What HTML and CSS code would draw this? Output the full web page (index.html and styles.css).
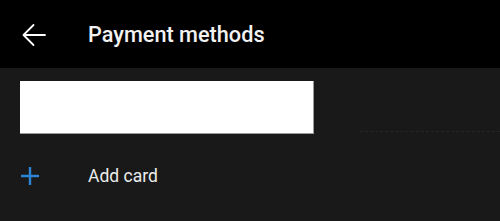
FILE: index.html
```html
<!DOCTYPE html>
<html lang="en">
<head>
    <meta charset="UTF-8">
    <title>Payment methods</title>
    <link rel="stylesheet" href="styles.css">
</head>
<body>
    <div class="top-bar">
        <svg class="back-icon" width="26" height="24" viewBox="0 0 26 24">
            <path d="M24 12H2.5M12.5 2L2.5 12l10 10" fill="none" stroke="#fff" stroke-width="1.8" stroke-linecap="round" stroke-linejoin="round"/>
        </svg>
        <h1 class="page-title">Payment methods</h1>
    </div>

    <div class="content">
        <div class="card-row">
            <div class="card"></div>
            <div class="card-fill"></div>
        </div>
        <div class="add-row">
            <svg class="plus-icon" width="20" height="20" viewBox="0 0 20 20">
                <path d="M10 1v18M1 10h18" stroke="#2b84d4" stroke-width="2.4"/>
            </svg>
            <span class="add-label">Add card</span>
        </div>
    </div>
</body>
</html>
```

FILE: styles.css
```css
body {
    margin: 0;
    height: 221px;
    overflow: hidden;
    background: #191919;
    font-family: Roboto, 'Noto Sans', sans-serif;
}

.top-bar {
    height: 68px;
    background: #000;
    display: flex;
    align-items: center;
    padding-left: 21px;
}

.back-icon {
    display: block;
    margin-top: 1px;
}

.page-title {
    margin: 1px 0 0 41px;
    font-size: 21.7px;
    font-weight: 500;
    color: #f2f2f2;
}

.content {
    padding: 13px 0 0 20px;
}

.card-row {
    display: flex;
}

.card {
    width: 293px;
    height: 52px;
    background: #fff;
    border-right: 1px solid #9a9a9a;
    border-bottom: 1px solid #9a9a9a;
}

.card-fill {
    flex: 1;
    align-self: flex-end;
    margin: 0 0 2px 46px;
    border-bottom: 1px dashed #262626;
}

.add-row {
    display: flex;
    align-items: center;
    height: 56px;
    margin-top: 14px;
}

.plus-icon {
    display: block;
}

.add-label {
    margin-left: 48px;
    font-size: 17.5px;
    color: #ececec;
}
```
